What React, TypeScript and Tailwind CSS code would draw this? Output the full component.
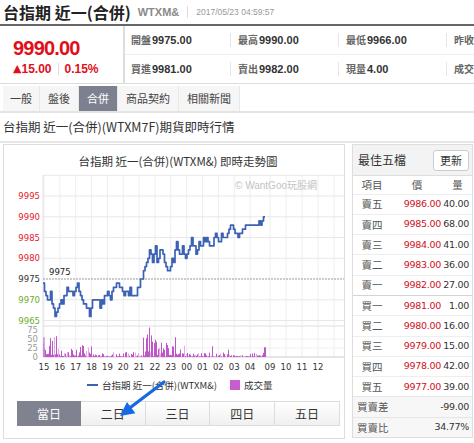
import React from 'react';

const cjk = "font-['Noto_Sans_CJK_TC','Noto_Sans_CJK_SC',sans-serif]";
const arial = "font-['Liberation_Sans','Noto_Sans_CJK_TC',sans-serif]";
const verd = "font-['DejaVu_Sans','Noto_Sans_CJK_TC',sans-serif]";

// seeded random so the chart is stable
let seed = 11;
const rnd = () => {
  seed = (seed * 16807) % 2147483647;
  return seed / 2147483647;
};

const yOf = (p: number) => 280 - (p - 9975) * 4.15;

const anchors: [number, number][] = [
  [43, 9974], [45, 9972], [47, 9970], [50, 9972], [53, 9968], [55, 9966], [58, 9968], [62, 9970],
  [66, 9971], [70, 9973], [73, 9971], [77, 9974], [80, 9971], [85, 9969], [89, 9967], [92, 9969],
  [95, 9971], [100, 9968], [105, 9971], [110, 9971], [113, 9972], [118, 9974], [122, 9972],
  [128, 9971], [131, 9972], [135, 9970], [138, 9973], [143, 9975], [146, 9978], [150, 9982],
  [153, 9980], [155, 9983], [158, 9979], [160, 9982], [163, 9981], [166, 9978], [169, 9977],
  [172, 9979], [175, 9981], [177, 9983], [180, 9981], [183, 9982], [185, 9979], [187, 9981],
  [191, 9984], [195, 9982], [200, 9983], [206, 9984], [210, 9983], [215, 9985], [220, 9984],
  [225, 9986], [229, 9987], [232, 9988], [235, 9986], [237, 9985], [242, 9987], [248, 9988],
  [255, 9988], [258, 9989], [260, 9988], [262, 9989], [265, 9990],
];

const interp = (x: number) => {
  for (let i = 0; i < anchors.length - 1; i++) {
    const [x0, p0] = anchors[i];
    const [x1, p1] = anchors[i + 1];
    if (x >= x0 && x <= x1) return p0 + ((p1 - p0) * (x - x0)) / (x1 - x0);
  }
  return anchors[anchors.length - 1][1];
};

const pricePath = (() => {
  let d = `M43 ${yOf(9974)}`;
  for (let x = 44.5; x <= 265; x += 1.5) {
    const r = rnd();
    const j = r < 0.18 ? -1 : r > 0.82 ? 1 : 0;
    const p = x > 263 ? 9990 : Math.round(interp(x) + j);
    d += ` H${x.toFixed(1)} V${yOf(p).toFixed(1)}`;
  }
  return d;
})();

const envelope = (x: number) => {
  if (x < 58) return 40;
  if (x < 75) return 16;
  if (x < 92) return 26;
  if (x < 143) return 10;
  if (x < 165) return 48;
  if (x < 185) return 30;
  if (x < 250) return 9;
  return 12;
};

const bars = (() => {
  const out: { x: number; v: number; light: boolean }[] = [];
  for (let x = 43; x <= 264; x += 1) {
    const r = rnd();
    let v = envelope(x) * (0.15 + r * r * 1.3);
    if (rnd() < 0.25) v = v * 0.25;
    out.push({ x, v, light: rnd() < 0.25 });
  }
  const spikes: [number, number][] = [
    [43.5, 55], [50, 52], [52, 45], [149, 82], [151, 60], [155, 48], [161, 40], [175, 55],
    [212, 30], [228, 20], [264, 27], [265, 27], [80, 28], [125, 12],
  ];
  spikes.forEach(([x, v]) => out.push({ x, v, light: false }));
  return out;
})();

const hourX = [
  ...['15', '16', '17', '18', '19', '20', '21', '22', '23', '00', '01', '02', '03', '04'].map((h, i) => ({
    h,
    x: 44 + 15.85 * i,
  })),
  { h: '09', x: 270 },
  { h: '10', x: 286 },
  { h: '11', x: 302 },
  { h: '12', x: 318 },
];

function Chart() {
  const yLabels: [number, string][] = [
    [9995, '#e5202a'],
    [9990, '#e5202a'],
    [9985, '#e5202a'],
    [9980, '#e5202a'],
    [9975, '#333'],
    [9970, '#6aac2a'],
    [9965, '#6aac2a'],
  ];
  return (
    <svg width={340} height={204} viewBox="4 172 340 204" className="block">
      {/* grid */}
      {[...hourX.map(h => h.x), 334].map(x => (
        <line key={x} x1={x} x2={x} y1={176} y2={358} stroke="#eeeeee" strokeWidth={1} />
      ))}
      {[10000, 9995, 9990, 9985, 9980, 9970, 9965].map(p => (
        <line key={p} x1={43} x2={344} y1={yOf(p)} y2={yOf(p)} stroke="#e8e8e8" strokeWidth={1} />
      ))}
      <line x1={43} x2={344} y1={340} y2={340} stroke="#f0f0f0" />
      <line x1={43} x2={344} y1={349} y2={349} stroke="#f0f0f0" />
      <line x1={43} x2={344} y1={327} y2={327} stroke="#dddddd" />
      <line x1={43} x2={344} y1={358} y2={358} stroke="#cccccc" />
      <line x1={43} x2={43} y1={176} y2={358} stroke="#e0e0e0" />
      <line x1={43} x2={344} y1={280} y2={280} stroke="#999" strokeWidth={1} strokeDasharray="2 1" />

      {/* labels */}
      <g fontFamily="DejaVu Sans, sans-serif" fontSize={8.5}>
        {yLabels.map(([p, c]) => (
          <text key={p} x={40} y={yOf(p) + 3} textAnchor="end" fill={c}>
            {p}
          </text>
        ))}
        <text x={49} y={276} fill="#222">9975</text>
        {[75, 50, 25, 0].map(v => (
          <text key={v} x={38} y={358 - v * 0.36 + 3} textAnchor="end" fill="#999">
            {v}
          </text>
        ))}
        {hourX.map(({ h, x }) => (
          <text key={h} x={x} y={371} textAnchor="middle" fill="#333">
            {h}
          </text>
        ))}
      </g>
      <text x={235} y={190} fontFamily="Liberation Sans, Noto Sans CJK TC, sans-serif" fontSize={10} fill="#c4c4c4">
        © WantGoo玩股網
      </text>

      {/* volume */}
      {bars.map((b, i) => {
        const h = Math.min(b.v, 85) * 0.36;
        return (
          <rect
            key={i}
            x={b.x}
            y={358 - h}
            width={1}
            height={h}
            fill={b.light ? '#e2a9e8' : '#bf55c8'}
          />
        );
      })}

      {/* price */}
      <path d={pricePath} fill="none" stroke="#3d62b3" strokeWidth={1.7} strokeLinejoin="round" />
    </svg>
  );
}

const infoRows = [
  [['開盤', '9975.00'], ['最高', '9990.00'], ['最低', '9966.00'], ['昨收', '9975.00']],
  [['買進', '9981.00'], ['賣出', '9982.00'], ['現量', '4.00'], ['成交', '1,234']],
];

const tabs = [
  { t: '一般', w: 'w-[37px]' },
  { t: '盤後', w: 'w-[39px]' },
  { t: '合併', w: 'w-[39px]', active: true },
  { t: '商品契約', w: 'w-[61px]' },
  { t: '相關新聞', w: 'w-[61px]' },
];

const book = [
  ['賣五', '9986.00', '40.00'],
  ['賣四', '9985.00', '68.00'],
  ['賣三', '9984.00', '41.00'],
  ['賣二', '9983.00', '36.00'],
  ['賣一', '9982.00', '27.00'],
  ['買一', '9981.00', '1.00'],
  ['買二', '9980.00', '16.00'],
  ['買三', '9979.00', '15.00'],
  ['買四', '9978.00', '42.00'],
  ['買五', '9977.00', '39.00'],
];

export default function App() {
  return (
    <div className={`relative w-[474px] h-[443px] overflow-hidden bg-white text-[#333] ${cjk}`}>
      {/* header */}
      <div className="flex h-[26px] items-center border-b-2 border-[#666] pl-[3px]">
        <span className="text-[16px] font-bold leading-[24px] text-[#222]">台指期 近一(合併)</span>
        <span className={`ml-[7px] text-[11px] font-bold text-[#8a8a8a] ${arial}`}>WTXM&amp;</span>
        <span className="mx-[8px] h-[12px] w-px bg-[#dddddd]" />
        <span className={`text-[8.5px] text-[#999] ${arial}`}>2017/05/23 04:59:57</span>
      </div>

      {/* quote info */}
      <div className="flex h-[58px] border-b border-[#dddddd]">
        <div className="flex w-[125px] shrink-0 flex-col border-r-2 border-[#dddddd] pl-[13px] pt-[13px]">
          <div className={`text-[20px] font-bold leading-[18px] tracking-[-0.8px] text-[#e0101b] ${arial}`}>
            9990.00
          </div>
          <div className={`mt-[5px] flex items-center text-[12px] font-bold leading-[14px] text-[#e0101b] ${arial}`}>
            <span className={`text-[11px] ${verd}`}>▲</span>
            <span>15.00</span>
            <span className="mx-[6px] h-[12px] w-px bg-[#dddddd]" />
            <span>0.15%</span>
          </div>
        </div>
        <div className="flex min-w-0 flex-1 flex-col overflow-hidden">
          {infoRows.map((row, ri) => (
            <div
              key={ri}
              className={`grid h-[29px] grid-cols-[105px_108px_108px_100px] items-center ${ri === 0 ? 'border-b border-[#eeeeee]' : ''}`}
            >
              {row.map(([k, v], ci) => (
                <div key={k} className="flex items-center whitespace-nowrap">
                  {ci > 0 && <span className="mr-[7px] h-[14px] w-px bg-[#e6e6e6]" />}
                  <span className={`${ci === 0 ? 'ml-[6px]' : ''} text-[10px] font-bold text-[#666]`}>{k}</span>
                  <span className={`ml-[1px] text-[11px] font-bold text-[#333] ${arial}`}>{v}</span>
                </div>
              ))}
            </div>
          ))}
        </div>
      </div>

      {/* tabs */}
      <div className="mt-[2px] flex h-[27px] border-b-2 border-[#e4e4e4] pl-[3px]">
        {tabs.map(tab => (
          <div
            key={tab.t}
            className={`${tab.w} flex items-center justify-center border-r border-[#e8e8e8] text-[11px] ${
              tab.active ? 'bg-[#7d818f] text-white' : 'bg-[#f6f6f6] text-[#444]'
            }`}
          >
            {tab.t}
          </div>
        ))}
      </div>

      {/* page title */}
      <div className="flex h-[30px] items-center border-b-2 border-[#e6e6e6] pl-[3px] text-[12.5px] text-[#333]">
        台指期 近一(合併)(WTXM7F)期貨即時行情
      </div>

      {/* body */}
      <div className="flex pl-[3px] pt-px">
        {/* chart box */}
        <div className="flex h-[295px] w-[342px] flex-col border border-[#dddddd]">
          <div className="h-[26px] pl-[8px] pt-[9px] text-center text-[11.5px] leading-[14px] text-[#333]">
            台指期 近一(合併)(WTXM&amp;) 即時走勢圖
          </div>
          <Chart />
          <div className="flex h-[20px] items-center pl-[83px] text-[9.5px] text-[#333]">
            <span className="mr-[4px] h-[2px] w-[11px] bg-[#3d62b3]" />
            <span>台指期 近一(合併)(WTXM&amp;)</span>
            <span className="ml-[13px] mr-[4px] h-[10px] w-[10px] bg-[#c45fcb]" />
            <span>成交量</span>
          </div>
          <div className="ml-[13px] mt-[6px] flex h-[25px] w-[323px]">
            {['當日', '二日', '三日', '四日', '五日'].map((d, i) => (
              <div
                key={d}
                className={`flex flex-1 items-center justify-center text-[12px] ${
                  i === 0
                    ? 'bg-[#80838f] text-white'
                    : 'border-y border-r border-[#dddddd] bg-gradient-to-b from-white to-[#f0f0f0] text-[#333]'
                }`}
              >
                {d}
              </div>
            ))}
          </div>
        </div>

        {/* best five */}
        <div className="ml-[7px] w-[121px] self-start border border-[#dddddd]">
          <div className="flex h-[31px] items-center justify-between border-b border-[#dddddd] bg-[#f3f3f3] pl-[5px] pr-[3px]">
            <span className="text-[12px] text-[#333]">最佳五檔</span>
            <span className="flex h-[21px] w-[36px] items-center justify-center rounded-[3px] border border-[#cccccc] bg-white text-[11px] text-[#333]">
              更新
            </span>
          </div>
          <div className="grid h-[17.5px] grid-cols-[38px_52px_1fr] items-center text-[10.5px] text-[#555]">
            <span className="text-center">項目</span>
            <span className="text-center">價</span>
            <span className="text-center">量</span>
          </div>
          {book.map(([k, p, q], i) => (
            <div
              key={k}
              className={`grid h-[20.3px] grid-cols-[38px_50px_1fr] items-center border-t ${
                i === 5 ? 'border-[#d4d4d4]' : 'border-[#eeeeee]'
              }`}
            >
              <span className="text-center text-[10.5px] text-[#555]">{k}</span>
              <span className={`text-right text-[9.5px] tracking-[-0.3px] text-[#d0101b] ${verd}`}>{p}</span>
              <span className={`pr-[3px] text-right text-[9.5px] tracking-[-0.3px] text-[#333] ${verd}`}>{q}</span>
            </div>
          ))}
          {[
            ['買賣差', '-99.00'],
            ['買賣比', '34.77%'],
          ].map(([k, v]) => (
            <div
              key={k}
              className="flex h-[20.3px] items-center justify-between border-t border-[#e6e6e6] bg-[#f7f7f7] pl-[4px] pr-[3px]"
            >
              <span className="text-[10.5px] text-[#555]">{k}</span>
              <span className={`text-[9.5px] tracking-[-0.3px] text-[#333] ${verd}`}>{v}</span>
            </div>
          ))}
        </div>
      </div>

      {/* annotation arrow */}
      <svg className="pointer-events-none absolute left-0 top-0" width={474} height={443}>
        <line x1={164} y1={382} x2={131} y2={407} stroke="#1668e3" strokeWidth={3.2} strokeLinecap="round" />
        <polygon points="120,416 135.4,413.2 127,402" fill="#1668e3" />
      </svg>
    </div>
  );
}
